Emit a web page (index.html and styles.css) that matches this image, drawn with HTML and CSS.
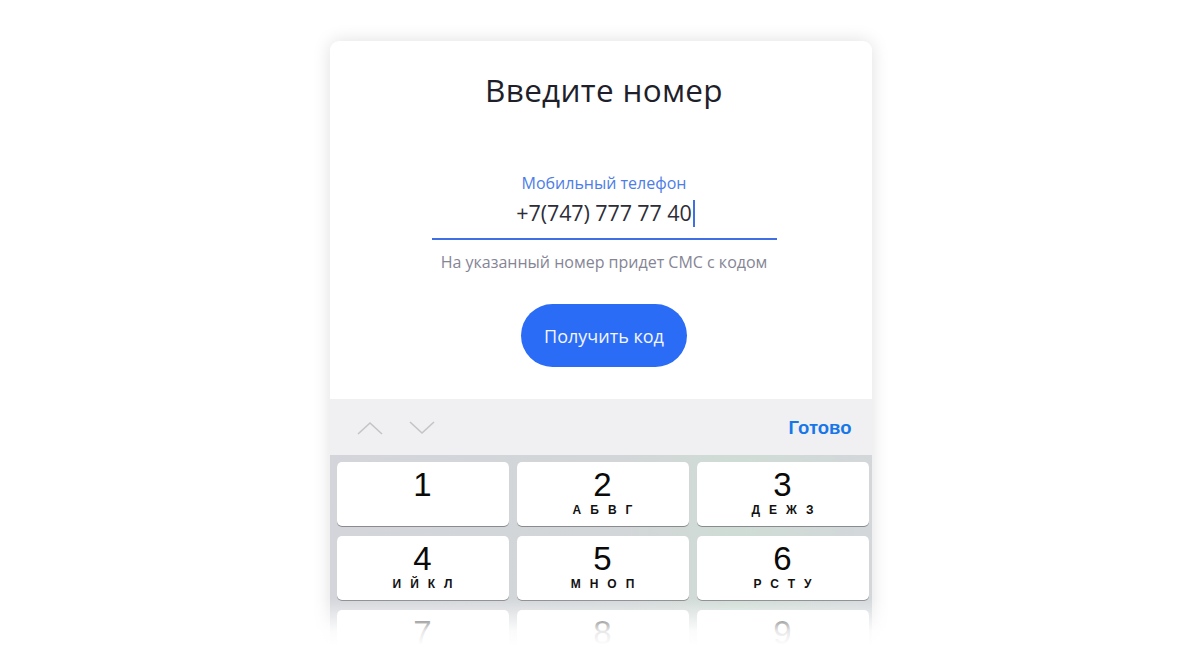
FILE: index.html
```html
<!DOCTYPE html>
<html lang="ru">
<head>
    <meta charset="UTF-8">
    <meta name="viewport" content="width=device-width, initial-scale=1.0">
    <title>Введите номер</title>
    <link rel="stylesheet" href="styles.css">
</head>
<body>

    <div class="page">
        <div class="card">
            <div class="form">
                <h1 class="title">Введите номер</h1>

                <div class="field">
                    <label class="field-label">Мобильный телефон</label>
                    <div class="field-input">+7(747) 777 77 40<span class="caret"></span></div>
                </div>
                <p class="hint">На указанный номер придет СМС с кодом</p>

                <button class="btn">Получить код</button>
            </div>

            <!-- keyboard accessory bar -->
            <div class="toolbar">
                <div class="arrows">
                    <svg class="arrow" width="26" height="14" viewBox="0 0 26 14">
                        <polyline points="1,13 13,2 25,13" fill="none" stroke="#c4c4c8" stroke-width="1.6"/>
                    </svg>
                    <svg class="arrow" width="26" height="14" viewBox="0 0 26 14">
                        <polyline points="1,1 13,12 25,1" fill="none" stroke="#c4c4c8" stroke-width="1.6"/>
                    </svg>
                </div>
                <span class="done">Готово</span>
            </div>

            <!-- number pad -->
            <div class="keyboard">
                <div class="key"><span class="digit">1</span><span class="letters"></span></div>
                <div class="key"><span class="digit">2</span><span class="letters">АБВГ</span></div>
                <div class="key"><span class="digit">3</span><span class="letters">ДЕЖЗ</span></div>
                <div class="key"><span class="digit">4</span><span class="letters">ИЙКЛ</span></div>
                <div class="key"><span class="digit">5</span><span class="letters">МНОП</span></div>
                <div class="key"><span class="digit">6</span><span class="letters">РСТУ</span></div>
                <div class="key"><span class="digit">7</span><span class="letters">ФХЦЧ</span></div>
                <div class="key"><span class="digit">8</span><span class="letters">ШЩЪЫ</span></div>
                <div class="key"><span class="digit">9</span><span class="letters">ЬЭЮЯ</span></div>
            </div>
        </div>
    </div>

    <!-- white fade at the bottom of the shot -->
    <div class="fade"></div>

</body>
</html>
```

FILE: styles.css
```css
html, body {
    margin: 0;
    padding: 0;
    height: 100%;
    overflow: hidden;
    background: #fff;
}

body {
    position: relative;
    font-family: "Open Sans", Arial, sans-serif;
}

.page {
    display: flex;
    justify-content: center;
    padding: 41px 0 0 8px;
}

.card {
    width: 542px;
    height: 630px;
    background: #fff;
    border-radius: 9px 9px 0 0;
    box-shadow: 0 0 18px rgba(0, 0, 0, 0.13);
    overflow: hidden;
    display: flex;
    flex-direction: column;
}

.form {
    flex-shrink: 0;
    display: flex;
    flex-direction: column;
    align-items: center;
    padding: 29px 0 0 7px;
}

.title {
    margin: 0;
    font-size: 31.5px;
    line-height: 40px;
    font-weight: 400;
    color: #1f1f2b;
    letter-spacing: 0.3px;
}

.field {
    width: 345px;
    margin-top: 63px;
    text-align: center;
}

.field-label {
    display: block;
    font-size: 16px;
    line-height: 20px;
    color: #4d7de6;
}

.field-input {
    margin-top: 6px;
    font-size: 21.5px;
    line-height: 28px;
    color: #2d2d38;
    padding: 0 0 11px 3px;
    border-bottom: 2.5px solid #3f6fe2;
    letter-spacing: -0.1px;
}

.caret {
    display: inline-block;
    width: 2px;
    height: 27px;
    background: #3f6fe2;
    vertical-align: -6px;
    margin-left: 1px;
}

.hint {
    margin: 12px 0 0;
    font-size: 16px;
    line-height: 20px;
    color: #858595;
}

.btn {
    margin-top: 32px;
    width: 166px;
    height: 63px;
    border: none;
    border-radius: 32px;
    background: #2b6cf6;
    color: #f3f6ff;
    font-family: "Open Sans", Arial, sans-serif;
    font-size: 18px;
    cursor: pointer;
}

.toolbar {
    flex-shrink: 0;
    margin-top: 32px;
    height: 56px;
    background: #f0f0f3;
    display: flex;
    align-items: center;
    justify-content: space-between;
    padding: 0 20px 0 27px;
}

.arrows {
    display: flex;
    gap: 26px;
    padding-top: 2px;
}

.done {
    font-family: "Liberation Sans", Arial, sans-serif;
    font-weight: 700;
    font-size: 18.5px;
    color: #1877e8;
    padding-top: 1px;
}

.keyboard {
    flex: 1;
    background: linear-gradient(90deg, #d3d5da 0%, #d2d6d8 55%, #cfdcd5 75%, #d3d7da 100%);
    display: grid;
    grid-template-columns: repeat(3, 172px);
    grid-auto-rows: 64px;
    column-gap: 8px;
    row-gap: 10px;
    padding: 7px 0 0 7px;
}

.key {
    background: #fff;
    border-radius: 5px;
    box-shadow: 0 1px 0 #8a8b8f;
    display: flex;
    flex-direction: column;
    align-items: center;
    padding-top: 5px;
    box-sizing: border-box;
}

.digit {
    font-family: "Liberation Sans", Arial, sans-serif;
    font-size: 33px;
    line-height: 36px;
    color: #0a0a0a;
}

.letters {
    font-family: "Liberation Sans", Arial, sans-serif;
    font-weight: 700;
    font-size: 12px;
    line-height: 14px;
    letter-spacing: 9px;
    margin-right: -9px;
    color: #111;
}

.fade {
    position: absolute;
    left: 0;
    right: 0;
    top: 598px;
    height: 73px;
    background: linear-gradient(180deg, rgba(255, 255, 255, 0) 0%, rgba(255, 255, 255, 0.9) 45%, #fff 65%);
    pointer-events: none;
}
```
